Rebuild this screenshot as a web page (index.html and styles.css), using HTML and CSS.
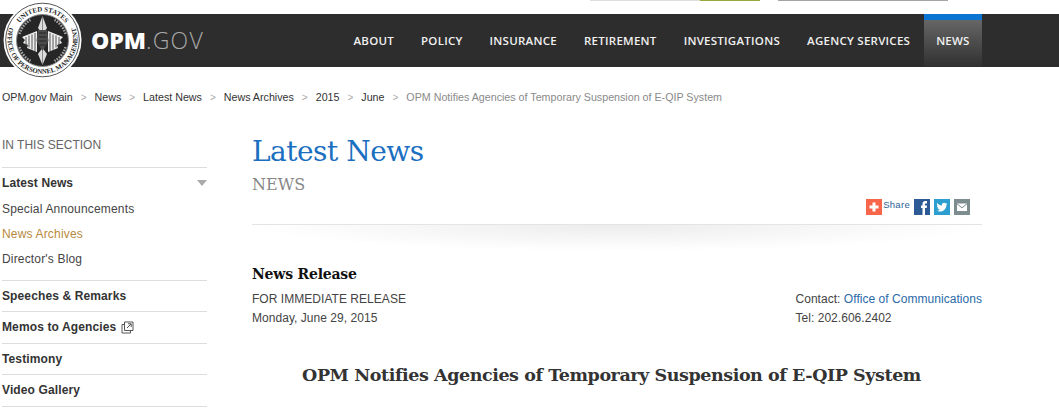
FILE: index.html
```html
<!DOCTYPE html>
<html lang="en">
<head>
<meta charset="utf-8">
<title>OPM Notifies Agencies of Temporary Suspension of E-QIP System</title>
<link rel="stylesheet" href="styles.css">
</head>
<body>
<div class="utility">
  <div class="util-bar util-green"></div>
  <div class="util-bar util-grey"></div>
</div>
<header class="masthead">
  <svg class="seal" viewBox="0 0 80 78" aria-hidden="true">
    <defs>
      <path id="arcTop" d="M12 39a28.500 28.500 0 0 1 57 0"/>
      <path id="arcBot" d="M7.200 27A35 35 0 1 0 73.800 27"/>
    </defs>
    <circle cx="40.500" cy="39" r="39" fill="#fff"/>
    <circle cx="40.500" cy="39" r="36.800" fill="#fff" stroke="#555" stroke-width="1"/>
    <circle cx="40.500" cy="39.500" r="26" fill="#262626" stroke="#888" stroke-width="1"/>
    <text class="seal-text"><textPath href="#arcTop" startOffset="50%" text-anchor="middle">UNITED STATES</textPath></text>
    <text class="seal-text"><textPath href="#arcBot" startOffset="50%" text-anchor="middle">OFFICE OF PERSONNEL MANAGEMENT</textPath></text>
    <g fill="none" stroke="#a8a8a8" stroke-width="2.400" stroke-dasharray="1.600 1.200">
      <path d="M17.500 33a23.500 23.500 0 0 1 11-14"/>
      <path d="M63.500 33a23.500 23.500 0 0 0-11-14"/>
      <path d="M17.500 46a23.500 23.500 0 0 0 11 14"/>
      <path d="M63.500 46a23.500 23.500 0 0 1-11 14"/>
    </g>
    <path d="M35 30L20 36l3 3-2 3 5 2-1 3 10 4z" fill="#efefef"/>
    <path d="M46 30l15 6-3 3 2 3-5 2 1 3-10 4z" fill="#efefef"/>
    <path d="M24 36v9M27 34.500v12M30 33.500v15M33 32v18M48 32v18M51 33.500v15M54 34.500v12M57 36v9" stroke="#444" stroke-width=".9" fill="none"/>
    <path d="M40.500 15l4.500 12-4.500 6-4.500-6z" fill="#dcdcdc"/>
    <path d="M40.500 64l4.500-11-4.500-6-4.500 6z" fill="#dcdcdc"/>
    <path d="M40.500 15v18M40.500 47v17" stroke="#555" stroke-width=".6"/>
    <path d="M36 29h9l1.500 11-6 10-6-10z" fill="#4c4c4c"/>
    <path d="M37 32h7M36.500 36h8M36.500 40h8M37.500 44h6" stroke="#222" stroke-width=".9" fill="none"/>
  </svg>
  <a class="brand" href="#"><b>OPM</b><span>.GOV</span></a>
  <nav class="nav">
    <a href="#">About</a>
    <a href="#">Policy</a>
    <a href="#">Insurance</a>
    <a href="#">Retirement</a>
    <a href="#">Investigations</a>
    <a href="#">Agency Services</a>
    <a class="active" href="#">News</a>
  </nav>
</header>
<ol class="crumbs">
  <li><a href="#">OPM.gov Main</a></li>
  <li><a href="#">News</a></li>
  <li><a href="#">Latest News</a></li>
  <li><a href="#">News Archives</a></li>
  <li><a href="#">2015</a></li>
  <li><a href="#">June</a></li>
  <li class="current">OPM Notifies Agencies of Temporary Suspension of E-QIP System</li>
</ol>
<div class="page">
  <aside class="side">
    <div class="side-title">IN THIS SECTION</div>
    <div class="side-group">
      <div class="side-open"><a href="#">Latest News</a><i class="caret"></i></div>
      <a class="sub" href="#">Special Announcements</a>
      <a class="sub sub-on" href="#">News Archives</a>
      <a class="sub" href="#">Director's Blog</a>
    </div>
    <a class="side-link" href="#">Speeches &amp; Remarks</a>
    <a class="side-link" href="#">Memos to Agencies
      <svg class="ext" viewBox="0 0 13 13" aria-hidden="true"><path d="M3.500 3.500H1v8.500h8.500V9.500" fill="none" stroke="#555"/><path d="M3.500 1H12v8.500H3.500z" fill="none" stroke="#555"/><path d="M6 7l4-4M7 2.800h3.200V6" fill="none" stroke="#555"/></svg></a>
    <a class="side-link" href="#">Testimony</a>
    <a class="side-link" href="#">Video Gallery</a>
  </aside>
  <main class="main">
    <h1 class="title">Latest News</h1>
    <div class="kicker">NEWS</div>
    <div class="share">
      <span class="sq sq-plus"><svg viewBox="0 0 16 16"><path d="M8 3.500v9M3.500 8h9" stroke="#fff" stroke-width="3"/></svg></span>
      <span class="share-label">Share</span>
      <span class="sq sq-fb"><svg viewBox="0 0 16 16"><path d="M8.500 16V9H7V6.600h1.500V5c0-2 1-3 2.800-3H13v2.400h-1.200c-.7 0-.9.300-.9 1v1.200H13L12.700 9H11v7z" fill="#fff"/></svg></span>
      <span class="sq sq-tw"><svg viewBox="0 0 16 16"><path d="M13.500 4.700c-.4.200-.8.300-1.300.400.500-.3.800-.7 1-1.300-.4.300-.9.500-1.400.6a2.300 2.300 0 0 0-3.900 2.100C6 6.400 4.300 5.500 3.200 4.100c-.6 1-.3 2.300.7 3-.4 0-.7-.1-1-.3 0 1.100.8 2.100 1.800 2.300-.3.100-.7.100-1 0 .3.900 1.100 1.600 2.100 1.600-.9.700-2 1.100-3.300.9 1 .7 2.200 1 3.400 1 4.200 0 6.600-3.500 6.500-6.800.4-.3.800-.7 1.100-1.100z" fill="#fff"/></svg></span>
      <span class="sq sq-mail"><svg viewBox="0 0 16 16"><path d="M3 4.500h10v7.500H3z" fill="#fff"/><path d="M3 4.800l5 4 5-4" fill="none" stroke="#7d8c8e"/></svg></span>
    </div>
    <div class="rule"></div>
    <h2 class="release">News Release</h2>
    <div class="meta">
      <div>FOR IMMEDIATE RELEASE<br>Monday, June 29, 2015</div>
      <div>Contact: <a href="#">Office of Communications</a><br>Tel: 202.606.2402</div>
    </div>
    <h3 class="headline">OPM Notifies Agencies of Temporary Suspension of E-QIP System</h3>
  </main>
</div>
</body>
</html>
```
FILE: styles.css
```css
* { box-sizing: border-box; }
html, body { margin: 0; padding: 0; }
body { background: #fff; color: #333; font-family: "Liberation Sans", Arial, sans-serif; font-size: 12px; overflow: hidden; height: 412px; }
a { color: inherit; text-decoration: none; }

.utility { height: 14px; display: flex; padding-left: 590px; gap: 18px; align-items: flex-start; }
.util-bar { height: 1px; width: 170px; }
.util-green { background: linear-gradient(to right, #ddd 0, #ddd 65%, #9aa83c 65%); }
.util-grey { background: #a5a5a5; }

.masthead { position: relative; height: 53px; background: #2d2d2d; display: flex; align-items: stretch; }
.seal { position: absolute; left: 2px; top: -13px; width: 80px; height: 78px; }
.seal-text { font: bold 6.800px "Liberation Serif", serif; fill: #222; }
.brand { margin: 10px 0 0 91px; font: 23px/32px "Open Sans", sans-serif; color: #a9a9a9; }
.brand b { color: #fff; font-weight: 800; }
.brand span { font-weight: 300; letter-spacing: 1.200px; }
.nav { margin-left: auto; margin-right: 77px; display: flex; }
.nav a { padding: 20px 13.500px 0; font: 600 11.500px/14px "Open Sans", sans-serif; color: #f0f0f0; text-transform: uppercase; letter-spacing: .26px; }
.nav .active { border-top: 6px solid #0a74d2; padding: 14px 12.500px 0; background: linear-gradient(#666, #303030); letter-spacing: .17px; }

.crumbs { list-style: none; margin: 0; padding: 24px 0 0 2px; display: flex; font-size: 10.700px; line-height: 13px; color: #333; }
.crumbs li + li::before { content: ">"; color: #aaa; margin: 0 8px; font-size: 10px; }
.crumbs .current { color: #8a8a8a; }

.page { display: flex; padding-top: 34px; }
.side { width: 205px; margin-left: 2px; flex: none; }
.side-title { color: #666; font-size: 12px; line-height: 14px; padding-bottom: 15px; border-bottom: 1px solid #ddd; }
.side-group { border-bottom: 1px solid #ddd; padding: 8px 0 14px; }
.side-open { display: flex; justify-content: space-between; align-items: center; font-weight: bold; line-height: 14px; letter-spacing: .1px; }
.caret { width: 0; height: 0; border: 5px solid transparent; border-top: 6px solid #aaa; border-bottom: 0; }
.sub { display: block; line-height: 14px; margin-top: 11px; color: #444; letter-spacing: .17px; }
.side-open + .sub { margin-top: 12px; }
.sub-on { color: #b8893c; }
.side-link { display: block; font-weight: bold; line-height: 14.400px; padding: 8px 0; border-bottom: 1px solid #ddd; color: #333; letter-spacing: .12px; }
.ext { width: 13px; height: 13px; vertical-align: -3px; margin-left: 1px; }

.main { width: 730px; margin-left: 45px; flex: none; }
.title { margin: 0; font: 400 28px/28px "DejaVu Serif", serif; color: #1a6fc0; letter-spacing: -.5px; }
.kicker { font: 16px/22px "DejaVu Serif", serif; color: #888; margin-top: 8px; }
.share { display: flex; justify-content: flex-end; padding-right: 12px; margin-top: 3px; height: 16px; }
.sq { width: 16px; height: 16px; display: block; margin-left: 4px; }
.sq svg { display: block; width: 16px; height: 16px; }
.sq-plus { background: #f7654a; }
.share-label { font-size: 9.500px; line-height: 11px; color: #2e5f96; margin: 0 0 0 1px; letter-spacing: .3px; }
.sq-fb { background: #2d5a94; }
.sq-tw { background: #2c9fd0; }
.sq-mail { background: #7d8c8e; }
.rule { height: 41px; margin-top: 9px; border-top: 1px solid #e4e4e4; background: radial-gradient(ellipse 50% 26px at 50% 0, #ececec, #fff 100%); }
.release { margin: 0; font: 700 14px/18px "DejaVu Serif", serif; color: #111; letter-spacing: -.2px; }
.meta { display: flex; justify-content: space-between; line-height: 19px; margin-top: 7px; color: #444; letter-spacing: .04px; }
.meta a { color: #2a6ba8; }
.headline { margin: 35px 0 0; padding-right: 11px; text-align: center; font: 700 17.500px/24px "DejaVu Serif", serif; color: #333; letter-spacing: -.43px; }
```
